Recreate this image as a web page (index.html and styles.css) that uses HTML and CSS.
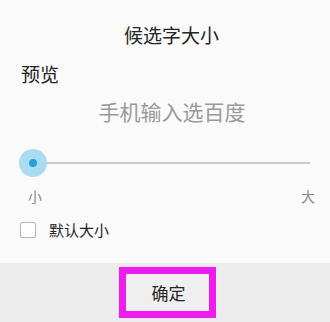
FILE: index.html
```html
<!DOCTYPE html>
<html lang="zh">
<head>
<meta charset="utf-8">
<link rel="stylesheet" href="styles.css">
</head>
<body>
<div class="dialog">
  <div class="content">
    <div class="title">候选字大小</div>
    <div class="label">预览</div>
    <div class="preview">手机输入选百度</div>
    <div class="slider">
      <div class="track"></div>
      <div class="thumb"><div class="dot"></div></div>
    </div>
    <div class="ticks"><span>小</span><span>大</span></div>
    <div class="check-row">
      <span class="checkbox"></span>
      <span class="check-label">默认大小</span>
    </div>
  </div>
  <div class="footer">
    <div class="btn-frame"><div class="btn">确定</div></div>
  </div>
</div>
</body>
</html>
```
FILE: styles.css
```css
html, body {
  margin: 0;
  padding: 0;
  background: #fafafa;
}
body {
  width: 330px;
  height: 322px;
  overflow: hidden;
  font-family: "Noto Sans CJK SC", "Noto Sans", sans-serif;
}
.dialog {
  display: flex;
  flex-direction: column;
  height: 322px;
}
.content {
  height: 263px;
  display: flex;
  flex-direction: column;
}
.title {
  margin-top: 25px;
  font-size: 19px;
  line-height: 19px;
  color: #262626;
  text-align: center;
  padding-left: 13px;
}
.label {
  margin-top: 20px;
  margin-left: 21px;
  font-size: 19px;
  line-height: 19px;
  color: #262626;
}
.preview {
  margin-top: 18px;
  font-size: 21px;
  line-height: 21px;
  color: #9a9a9a;
  text-align: center;
  padding-left: 14px;
}
.slider {
  position: relative;
  margin-top: 27px;
  height: 28px;
}
.track {
  position: absolute;
  left: 33px;
  right: 20px;
  top: 13px;
  height: 2px;
  background: #c9c9c9;
}
.thumb {
  position: absolute;
  left: 19px;
  top: 0;
  width: 28px;
  height: 28px;
  border-radius: 50%;
  background: #aadcf1;
  display: flex;
  align-items: center;
  justify-content: center;
}
.dot {
  width: 8px;
  height: 8px;
  border-radius: 50%;
  background: #2a9fd8;
}
.ticks {
  margin-top: 12px;
  display: flex;
  justify-content: space-between;
  padding: 0 15px 0 28px;
  font-size: 14px;
  line-height: 14px;
  color: #8a8a8a;
}
.check-row {
  margin-top: 18px;
  display: flex;
  align-items: center;
  padding-left: 20px;
  height: 17px;
}
.checkbox {
  width: 14px;
  height: 14px;
  border: 1.5px solid #b5b5b5;
  border-radius: 2px;
  background: #fff;
}
.check-label {
  margin-left: 13px;
  font-size: 15px;
  line-height: 15px;
  color: #262626;
}
.footer {
  flex: 1;
  background: #ececec;
  display: flex;
  justify-content: center;
  padding-top: 4px;
  padding-left: 4px;
  box-sizing: border-box;
}
.btn-frame {
  width: 97px;
  height: 51px;
  box-sizing: border-box;
  border: 7px solid #ee1cee;
  background: #efefef;
  display: flex;
  align-items: center;
  justify-content: center;
  padding-left: 3px;
}
.btn {
  font-size: 17px;
  line-height: 17px;
  color: #262626;
}
```
